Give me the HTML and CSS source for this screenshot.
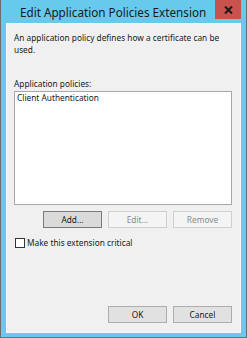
FILE: index.html
```html
<!DOCTYPE html>
<html>
<head>
  <meta charset="UTF-8">
  <title>Edit Application Policies Extension</title>
  <link rel="stylesheet" href="styles.css">
</head>
<body>
  <div class="window">
    <div class="titlebar">
      <span class="title">Edit Application Policies Extension</span>
      <div class="close">
        <svg width="9" height="8" viewBox="0 0 9 8"><path d="M1 0.5 L8 7.5 M8 0.5 L1 7.5" stroke="#1a1a1a" stroke-width="2"/></svg>
      </div>
    </div>

    <div class="client">
      <p class="desc">An application policy defines how a certificate can be used.</p>

      <div class="label">Application policies:</div>
      <div class="listbox">
        <div class="item">Client Authentication</div>
      </div>

      <div class="btnrow">
        <button class="btn focus">Add...</button>
        <button class="btn" disabled>Edit...</button>
        <button class="btn" disabled>Remove</button>
      </div>

      <label class="check"><span class="box"></span>Make this extension critical</label>

      <div class="spacer"></div>

      <div class="btnrow">
        <button class="btn">OK</button>
        <button class="btn">Cancel</button>
      </div>
    </div>
  </div>
</body>
</html>
```

FILE: styles.css
```css
body { margin: 0; font-family: "Noto Sans", "Open Sans", sans-serif; font-size: 8.3px; color: #1a1a1a; }
.window { width: 247px; height: 338px; box-sizing: border-box; border: 1px solid #6d6d6d; border-top: none; background: #67c9ec; display: flex; flex-direction: column; padding: 0 5px 4px 5px; }
.titlebar { height: 23px; display: flex; align-items: flex-start; }
.title { font-size: 11.7px; line-height: 24px; padding-left: 14px; color: #1b1b1b; flex: 1; white-space: nowrap; }
.close { width: 26px; height: 19px; background: #c8534c; display: flex; align-items: center; justify-content: center; flex: none; }
.client { flex: 1; background: #f0f0f0; border: 1px solid #f9f9f9; display: flex; flex-direction: column; padding: 0 8px 9px 7px; }
.desc { margin: 8px 0 0 0; line-height: 12px; }
.label { margin-top: 22px; line-height: 12px; }
.listbox { margin-top: 1px; height: 114px; box-sizing: border-box; background: #fff; border: 1px solid #a8a8a8; padding: 0 2px; }
.item { line-height: 12px; }
.btnrow { display: flex; justify-content: flex-end; gap: 6px; margin-top: 6px; }
.btn { width: 59px; height: 17px; box-sizing: border-box; padding: 0; font: inherit; color: #1a1a1a; background: #e1e1e1; border: 1px solid #adadad; }
.btn.focus { background: #dadada; border-color: #7a7a7a; }
.btn:disabled { background: #f4f4f4; border-color: #cfcfcf; color: #8a8a8a; }
.check { display: flex; align-items: center; gap: 2px; margin-top: 9px; line-height: 12px; }
.check .box { width: 10px; height: 10px; box-sizing: border-box; background: #fff; border: 1px solid #333; margin-left: 1px; }
.spacer { flex: 1; }
```
